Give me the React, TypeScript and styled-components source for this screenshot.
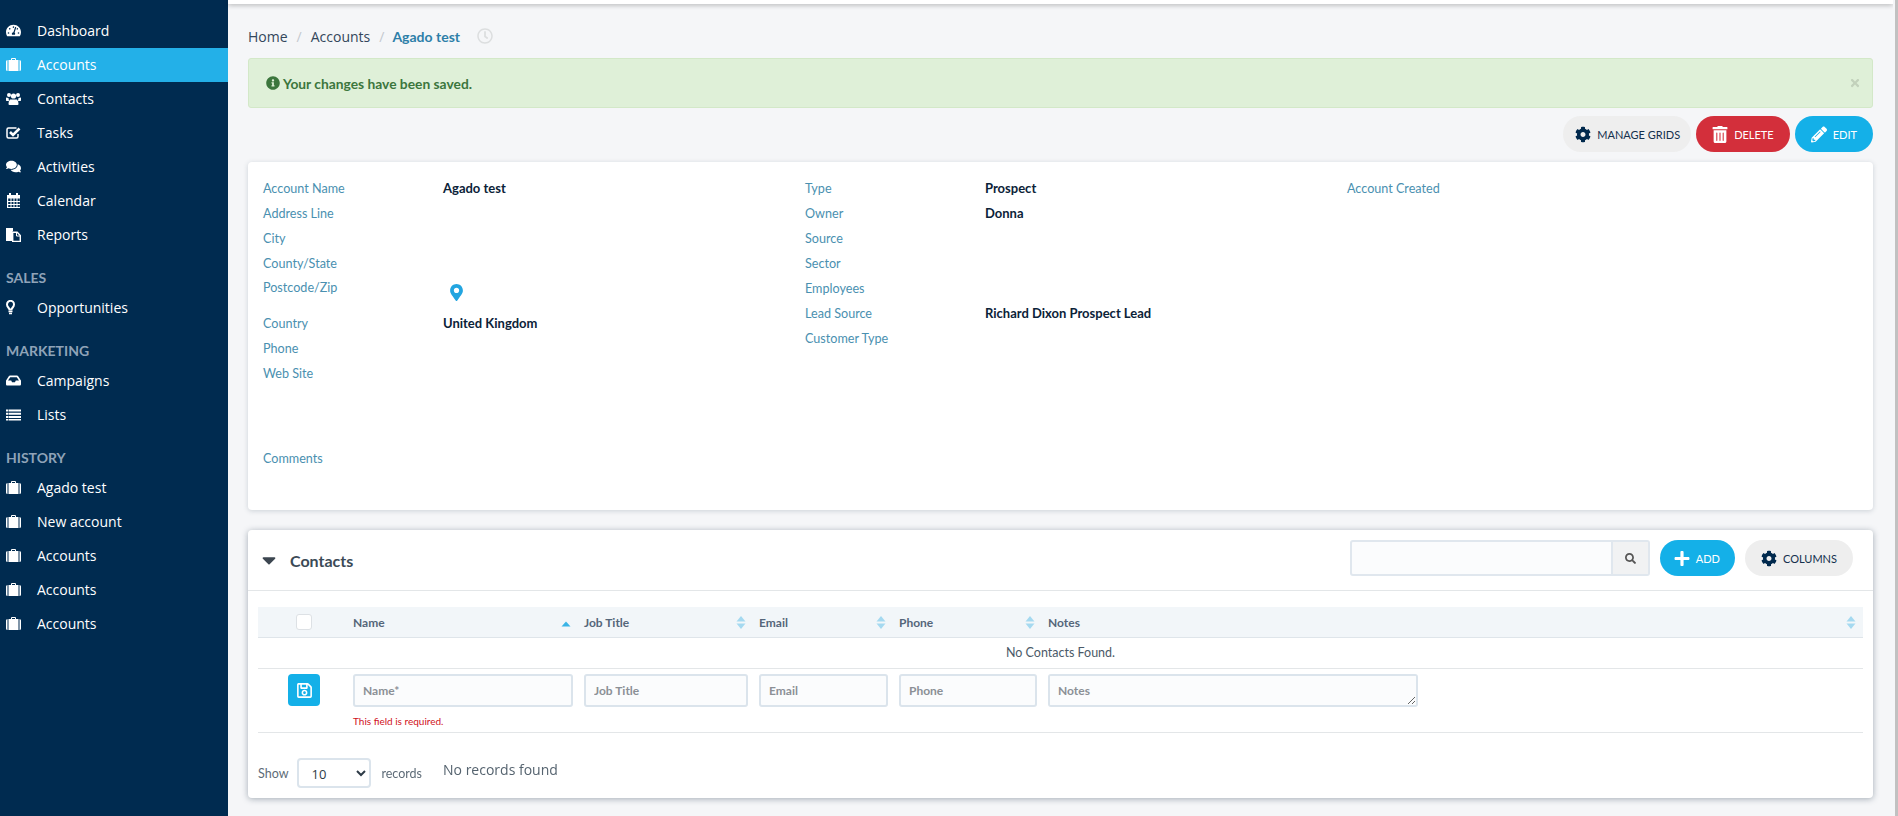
import React from "react";
import styled, { createGlobalStyle } from "styled-components";
import {
  FaTachometerAlt,
  FaComments,
  FaInbox,
  FaRegClock,
  FaInfoCircle,
  FaTimes,
  FaCog,
  FaTrashAlt,
  FaPencilAlt,
  FaMapMarkerAlt,
  FaCaretDown,
  FaSearch,
  FaPlus,
  FaRegSave,
} from "react-icons/fa";

const GlobalStyle = createGlobalStyle`
  html, body {
    margin: 0;
    padding: 0;
    height: 100%;
    overflow: hidden;
    background: #f5f6f8;
  }
  * {
    box-sizing: border-box;
  }
`;

const Page = styled.div`
  display: flex;
  width: 1898px;
  height: 816px;
  font-family: "Open Sans", sans-serif;
`;

const Sidebar = styled.nav`
  width: 228px;
  flex-shrink: 0;
  background: #002b50;
  padding-top: 14px;
`;

const NavItem = styled.div<{ $active?: boolean }>`
  display: flex;
  align-items: center;
  height: 34px;
  padding: 0 0 1px 6px;
  background: ${(p) => (p.$active ? "#23b0e8" : "transparent")};
  color: #fff;
  font-size: 14px;
  svg {
    width: 15px;
    height: 15px;
    margin-right: 16px;
  }
`;

const NavHeading = styled.div`
  margin-top: 17px;
  height: 17px;
  line-height: 17px;
  padding-left: 6px;
  margin-bottom: 5px;
  color: #8fa3b8;
  font-family: Lato, sans-serif;
  font-size: 14px;
  font-weight: 700;
`;

const Main = styled.main`
  flex: 1;
  min-width: 0;
`;

const ScrollTrack = styled.div`
  width: 5px;
  flex-shrink: 0;
  background: #f5f6f8;
  border-right: 3px solid #c1c1c1;
`;

const TopBar = styled.div`
  height: 4px;
  background: #fff;
  box-shadow: 0 1px 5px rgba(0, 0, 0, 0.3);
`;

const Content = styled.div`
  padding: 0 20px;
`;

const Breadcrumb = styled.div`
  display: flex;
  align-items: center;
  height: 54px;
  padding-top: 10px;
  font-size: 14px;
  color: #33475b;
`;

const Crumb = styled.span<{ $current?: boolean }>`
  margin-left: ${(p) => (p.$current ? "-1px" : "0")};
  color: ${(p) => (p.$current ? "#2d7fa8" : "#33475b")};
  font-family: ${(p) => (p.$current ? "Lato, sans-serif" : "inherit")};
  font-weight: ${(p) => (p.$current ? 700 : 400)};
`;

const CrumbSep = styled.span`
  margin: 0 9px;
  color: #c4c9cf;
`;

const CrumbClock = styled(FaRegClock)`
  width: 16px;
  height: 16px;
  margin-left: 17px;
  color: #dcdedf;
`;

const Alert = styled.div`
  display: flex;
  align-items: center;
  justify-content: space-between;
  height: 50px;
  padding: 0 11px 0 17px;
  background: #dff0d8;
  border: 1px solid #d3e8c8;
  border-radius: 3px;
  color: #3c763d;
  font-family: Lato, sans-serif;
  font-size: 13.8px;
  font-weight: 700;
`;

const AlertText = styled.span`
  display: flex;
  align-items: center;
  gap: 3px;
  svg {
    width: 14px;
    height: 14px;
  }
`;

const AlertClose = styled(FaTimes)`
  width: 12px;
  height: 12px;
  color: #c2d1bb;
`;

const Actions = styled.div`
  display: flex;
  justify-content: flex-end;
  gap: 5px;
  margin-top: 8px;
`;

const PillButton = styled.button<{ $kind: "grey" | "red" | "blue"; $pad?: string }>`
  display: inline-flex;
  align-items: center;
  gap: 6px;
  height: 36px;
  padding: ${(p) => p.$pad ?? "0 16px"};
  border: 0;
  border-radius: 18px;
  font-family: Lato, sans-serif;
  font-size: 11px;
  background: ${(p) =>
    p.$kind === "grey" ? "#eeeeee" : p.$kind === "red" ? "#d32f3b" : "#14b0e8"};
  color: ${(p) => (p.$kind === "grey" ? "#14304d" : "#fff")};
  svg {
    width: 16px;
    height: 17px;
    color: ${(p) => (p.$kind === "grey" ? "#00294d" : "#fff")};
  }
`;

const Card = styled.section`
  background: #fff;
  border-radius: 4px;
  box-shadow: 0 1px 5px rgba(60, 80, 100, 0.22);
`;

const DetailsCard = styled(Card)`
  display: grid;
  grid-template-columns: 542px 542px 1fr;
  height: 348px;
  margin-top: 10px;
  padding: 14px 15px 0;
`;

const DetailColumn = styled.div`
  display: flex;
  flex-direction: column;
`;

const DetailRow = styled.div<{ $height?: number; $top?: number }>`
  display: grid;
  grid-template-columns: 180px 1fr;
  align-items: ${(p) => (p.$height ? "start" : "center")};
  height: ${(p) => p.$height ?? 25}px;
  margin-top: ${(p) => p.$top ?? 0}px;
  line-height: 25px;
`;

const DetailLabel = styled.span`
  margin-top: -1px;
  color: #4a90b0;
  font-family: Lato, sans-serif;
  font-size: 12.6px;
`;

const DetailValue = styled.span`
  color: #0b2238;
  font-family: Lato, sans-serif;
  font-size: 13px;
  font-weight: 700;
`;

const Pin = styled(FaMapMarkerAlt)`
  display: block;
  width: 13px;
  height: 17px;
  margin: 8px 0 0 7px;
  color: #23a5e0;
`;

const ContactsCard = styled(Card)`
  height: 268px;
  margin-top: 20px;
  box-shadow: 0 1px 6px rgba(40, 60, 80, 0.4);
`;

const CardHeader = styled.div`
  display: flex;
  align-items: center;
  height: 61px;
  padding: 0 20px 4px 14px;
  border-bottom: 1px solid #e3e6e8;
`;

const Caret = styled(FaCaretDown)`
  width: 14px;
  height: 22px;
  margin: 3px 14px 0 0;
  color: #3c4650;
`;

const CardTitle = styled.h2`
  flex: 1;
  margin: 4px 0 0;
  color: #3b4a56;
  font-family: Lato, sans-serif;
  font-size: 16px;
  font-weight: 700;
`;

const SearchBox = styled.div`
  display: flex;
  width: 300px;
  height: 36px;
  margin-right: 10px;
  background: #fbfcfd;
  border: 2px solid #e0e7ee;
  border-radius: 3px;
`;

const SearchInput = styled.input`
  flex: 1;
  min-width: 0;
  border: 0;
  background: transparent;
`;

const SearchButton = styled.div`
  display: flex;
  align-items: center;
  justify-content: center;
  width: 37px;
  background: #f1f2f3;
  border-left: 2px solid #e0e7ee;
  svg {
    width: 11px;
    height: 11px;
    color: #555;
  }
`;

const HeaderButtons = styled.div`
  display: flex;
  gap: 10px;
`;

const TableWrap = styled.div`
  padding: 16px 10px 0;
`;

const gridColumns = "95px 231px 175px 140px 149px 1fr";

const HeadRow = styled.div`
  display: grid;
  grid-template-columns: ${gridColumns};
  height: 31px;
  align-items: center;
  background: #f2f6f9;
  border-bottom: 1px solid #dfe5ea;
  color: #55667a;
  font-family: Lato, sans-serif;
  font-size: 12px;
  font-weight: 700;
`;

const CheckCell = styled.div`
  display: flex;
  justify-content: center;
  padding-right: 3px;
`;

const Checkbox = styled.span`
  width: 16px;
  height: 16px;
  background: #fff;
  border: 1px solid #dde1e5;
  border-radius: 3px;
`;

const HeadCell = styled.div`
  display: flex;
  align-items: center;
  justify-content: space-between;
  padding-right: 13px;
  &:last-child {
    padding-right: 7px;
  }
`;

const SortSvg = styled.svg`
  width: 10px;
  height: 13px;
`;

const SortArrows = ({ active }: { active?: boolean }) => (
  <SortSvg viewBox="0 0 10 13">
    {active ? (
      <path d="M5 5.5 9.5 10.5H.5Z" fill="#3ab4e6" />
    ) : (
      <>
        <path d="M5 0 9.5 5.5H.5Z" fill="#a5d9f0" />
        <path d="M5 13 .5 7.5H9.5Z" fill="#a5d9f0" />
      </>
    )}
  </SortSvg>
);

const EmptyRow = styled.div`
  height: 31px;
  line-height: 30px;
  text-align: center;
  border-bottom: 1px solid #e3e6e8;
  color: #4b5a68;
  font-family: Lato, sans-serif;
  font-size: 12.5px;
`;

const AddRow = styled.div`
  display: grid;
  grid-template-columns: ${gridColumns};
  height: 64px;
  padding-top: 5px;
  border-bottom: 1px solid #e3e6e8;
`;

const SaveCell = styled.div`
  display: flex;
  justify-content: center;
  align-items: flex-start;
  padding-right: 3px;
`;

const SaveButton = styled.button`
  display: flex;
  align-items: center;
  justify-content: center;
  width: 32px;
  height: 32px;
  padding: 0;
  border: 0;
  border-radius: 4px;
  background: #14b0e8;
  color: #fff;
  svg {
    width: 17px;
    height: 17px;
  }
`;

const FieldCell = styled.div`
  padding-right: 11px;
`;

const Field = styled.input`
  display: block;
  width: 100%;
  height: 33px;
  padding: 0 8px;
  background: #fbfcfd;
  border: 2px solid #dbe4ec;
  border-radius: 3px;
  font-family: Lato, sans-serif;
  font-size: 12px;
  font-weight: 700;
  &::placeholder {
    color: #8b9096;
    opacity: 1;
  }
`;

const NotesField = styled.textarea`
  display: block;
  width: 370px;
  height: 33px;
  padding: 8px;
  background: #fbfcfd;
  border: 2px solid #dbe4ec;
  border-radius: 3px;
  font-family: Lato, sans-serif;
  font-size: 12px;
  font-weight: 700;
  line-height: 14px;
  &::placeholder {
    color: #8b9096;
    opacity: 1;
  }
`;

const FieldError = styled.div`
  margin-top: 8px;
  color: #d0111b;
  font-family: Lato, sans-serif;
  font-size: 10px;
`;

const Footer = styled.div`
  display: flex;
  align-items: center;
  height: 55px;
  padding-top: 25px;
  color: #5d6b77;
  font-family: Lato, sans-serif;
  font-size: 12.5px;
`;

const PageSize = styled.select`
  width: 74px;
  height: 30px;
  margin: 0 10px 0 9px;
  padding: 2px 0 0 8px;
  background: #fff;
  border: 2px solid #dbe4ec;
  border-radius: 4px;
  color: #2e3b47;
  font-family: "Open Sans", sans-serif;
  font-size: 13px;
`;

const NoRecords = styled.span`
  margin: 0 0 8px 21px;
  font-family: "Open Sans", sans-serif;
  font-size: 14px;
  color: #55636f;
`;

const BriefcaseIcon = () => (
  <svg viewBox="0 0 15 15" fill="#fff">
    <path d="M5 3V2q0-1 1-1h3q1 0 1 1v1H9V2H6v1Z" />
    <path d="M0 4.5Q0 3 1.500 3V14Q0 14 0 12.500ZM2.500 3h10V14h-10ZM13.500 3Q15 3 15 4.500v8Q15 14 13.500 14Z" />
  </svg>
);

const UsersIcon = () => (
  <svg viewBox="0 0 15 15" fill="#fff">
    <circle cx="3" cy="4" r="2" />
    <circle cx="12" cy="4" r="2" />
    <circle cx="7.500" cy="5" r="2.600" />
    <path d="M0 6.500 2.500 7 3 10H.5Q0 10 0 9ZM15 6.500 12.500 7 12 10h2.500Q15 10 15 9Z" />
    <path d="M4 8.500h7q1.500 1 1.500 4.500 0 1-1 1h-8q-1 0-1-1 0-3.500 1.500-4.500Z" />
  </svg>
);

const CheckSquareIcon = () => (
  <svg viewBox="0 0 15 15" fill="none" stroke="#fff">
    <path d="M10.500 3H2.500Q1 3 1 4.500v7Q1 13 2.500 13h8q1.500 0 1.500-1.500V9" strokeWidth="1.500" />
    <path d="M4 7 7 10l6.500-6.500" strokeWidth="2.600" />
  </svg>
);

const CalendarIcon = () => (
  <svg viewBox="0 0 15 15" fill="#fff">
    <path
      fillRule="evenodd"
      d="M3 0h2v2h5V0h2v2h2v13H1V2h2ZM2.200 5.500V8h2.300V5.500ZM5.500 5.500V8h2V5.500ZM8.500 5.500V8h2V5.500ZM11.500 5.500V8h2.300V5.500ZM2.200 9v2h2.300V9ZM5.500 9v2h2V9ZM8.500 9v2h2V9ZM11.500 9v2h2.300V9ZM2.200 12v2h2.300v-2ZM5.500 12v2h2v-2ZM8.500 12v2h2v-2ZM11.500 12v2h2.300v-2Z"
    />
  </svg>
);

const ReportsIcon = () => (
  <svg viewBox="0 0 15 15">
    <path d="M0 1h7v3.500H6V14H0Z" fill="#fff" />
    <path d="M6.700 5.200h4.500L14.300 8.500v6H6.700Z" fill="#002b50" stroke="#fff" strokeWidth="1.400" />
    <path d="M10.500 5v4h4" fill="none" stroke="#fff" strokeWidth="1" />
  </svg>
);

// bulb is narrower than the other nav icons but keeps the same text column
const BulbIcon = () => (
  <svg viewBox="0 0 15 15" fill="none" stroke="#fff">
    <path d="M3.500 9.500C3.300 8 1 7 1 4.500 1 2.200 2.800.8 4.500.8S8 2.200 8 4.500C8 7 5.700 8 5.500 9.500Z" strokeWidth="2" />
    <path d="M2.500 11.500h4M3 13.500h3" strokeWidth="1.700" />
  </svg>
);

const ListIcon = () => (
  <svg viewBox="0 0 15 15" fill="#fff">
    <path d="M0 2.500h2.500v2H0ZM3 2.500h12v2H3ZM0 5.700h2.500v2H0ZM3 5.700h12v2H3ZM0 8.900h2.500v2H0ZM3 8.900h12v2H3ZM0 12h2.500v1.500H0ZM3 12h12v1.500H3Z" />
  </svg>
);

const navTop = [
  { label: "Dashboard", icon: <FaTachometerAlt /> },
  { label: "Accounts", icon: <BriefcaseIcon />, active: true },
  { label: "Contacts", icon: <UsersIcon /> },
  { label: "Tasks", icon: <CheckSquareIcon /> },
  { label: "Activities", icon: <FaComments /> },
  { label: "Calendar", icon: <CalendarIcon /> },
  { label: "Reports", icon: <ReportsIcon /> },
];

const history = ["Agado test", "New account", "Accounts", "Accounts", "Accounts"];

const middleRows = [
  ["Type", "Prospect"],
  ["Owner", "Donna"],
  ["Source", ""],
  ["Sector", ""],
  ["Employees", ""],
  ["Lead Source", "Richard Dixon Prospect Lead"],
  ["Customer Type", ""],
];

const App = () => (
  <Page>
    <GlobalStyle />
    <Sidebar>
      {navTop.map(({ label, icon, active }) => (
        <NavItem key={label} $active={active}>
          {icon}
          {label}
        </NavItem>
      ))}
      <NavHeading>SALES</NavHeading>
      <NavItem>
        <BulbIcon />
        Opportunities
      </NavItem>
      <NavHeading>MARKETING</NavHeading>
      <NavItem>
        <FaInbox />
        Campaigns
      </NavItem>
      <NavItem>
        <ListIcon />
        Lists
      </NavItem>
      <NavHeading>HISTORY</NavHeading>
      {history.map((label, idx) => (
        <NavItem key={idx}>
          <BriefcaseIcon />
          {label}
        </NavItem>
      ))}
    </Sidebar>
    <Main>
      <TopBar />
      <Content>
        <Breadcrumb>
          <Crumb>Home</Crumb>
          <CrumbSep>/</CrumbSep>
          <Crumb>Accounts</Crumb>
          <CrumbSep>/</CrumbSep>
          <Crumb $current>Agado test</Crumb>
          <CrumbClock />
        </Breadcrumb>
        <Alert>
          <AlertText>
            <FaInfoCircle />
            Your changes have been saved.
          </AlertText>
          <AlertClose />
        </Alert>
        <Actions>
          <PillButton $kind="grey" $pad="0 11px 0 12px">
            <FaCog />
            MANAGE GRIDS
          </PillButton>
          <PillButton $kind="red">
            <FaTrashAlt />
            DELETE
          </PillButton>
          <PillButton $kind="blue">
            <FaPencilAlt />
            EDIT
          </PillButton>
        </Actions>
        <DetailsCard>
          <DetailColumn>
            <DetailRow>
              <DetailLabel>Account Name</DetailLabel>
              <DetailValue>Agado test</DetailValue>
            </DetailRow>
            <DetailRow>
              <DetailLabel>Address Line</DetailLabel>
            </DetailRow>
            <DetailRow>
              <DetailLabel>City</DetailLabel>
            </DetailRow>
            <DetailRow>
              <DetailLabel>County/State</DetailLabel>
            </DetailRow>
            <DetailRow $height={35}>
              <DetailLabel>Postcode/Zip</DetailLabel>
              <Pin />
            </DetailRow>
            <DetailRow>
              <DetailLabel>Country</DetailLabel>
              <DetailValue>United Kingdom</DetailValue>
            </DetailRow>
            <DetailRow>
              <DetailLabel>Phone</DetailLabel>
            </DetailRow>
            <DetailRow>
              <DetailLabel>Web Site</DetailLabel>
            </DetailRow>
            <DetailRow $top={60}>
              <DetailLabel>Comments</DetailLabel>
            </DetailRow>
          </DetailColumn>
          <DetailColumn>
            {middleRows.map(([label, value]) => (
              <DetailRow key={label}>
                <DetailLabel>{label}</DetailLabel>
                {value && <DetailValue>{value}</DetailValue>}
              </DetailRow>
            ))}
          </DetailColumn>
          <DetailColumn>
            <DetailRow>
              <DetailLabel>Account Created</DetailLabel>
            </DetailRow>
          </DetailColumn>
        </DetailsCard>
        <ContactsCard>
          <CardHeader>
            <Caret />
            <CardTitle>Contacts</CardTitle>
            <SearchBox>
              <SearchInput />
              <SearchButton>
                <FaSearch />
              </SearchButton>
            </SearchBox>
            <HeaderButtons>
              <PillButton $kind="blue" $pad="0 15px 0 14px">
                <FaPlus />
                ADD
              </PillButton>
              <PillButton $kind="grey">
                <FaCog />
                COLUMNS
              </PillButton>
            </HeaderButtons>
          </CardHeader>
          <TableWrap>
            <HeadRow>
              <CheckCell>
                <Checkbox />
              </CheckCell>
              <HeadCell>
                Name
                <SortArrows active />
              </HeadCell>
              <HeadCell>
                Job Title
                <SortArrows />
              </HeadCell>
              <HeadCell>
                Email
                <SortArrows />
              </HeadCell>
              <HeadCell>
                Phone
                <SortArrows />
              </HeadCell>
              <HeadCell>
                Notes
                <SortArrows />
              </HeadCell>
            </HeadRow>
            <EmptyRow>No Contacts Found.</EmptyRow>
            <AddRow>
              <SaveCell>
                <SaveButton>
                  <FaRegSave />
                </SaveButton>
              </SaveCell>
              <FieldCell>
                <Field placeholder="Name*" />
                <FieldError>This field is required.</FieldError>
              </FieldCell>
              <FieldCell>
                <Field placeholder="Job Title" />
              </FieldCell>
              <FieldCell>
                <Field placeholder="Email" />
              </FieldCell>
              <FieldCell>
                <Field placeholder="Phone" />
              </FieldCell>
              <FieldCell>
                <NotesField placeholder="Notes" />
              </FieldCell>
            </AddRow>
            <Footer>
              Show
              <PageSize defaultValue="10">
                <option value="10">10</option>
                <option value="25">25</option>
                <option value="50">50</option>
              </PageSize>
              records
              <NoRecords>No records found</NoRecords>
            </Footer>
          </TableWrap>
        </ContactsCard>
      </Content>
    </Main>
    <ScrollTrack />
  </Page>
);

export default App;
